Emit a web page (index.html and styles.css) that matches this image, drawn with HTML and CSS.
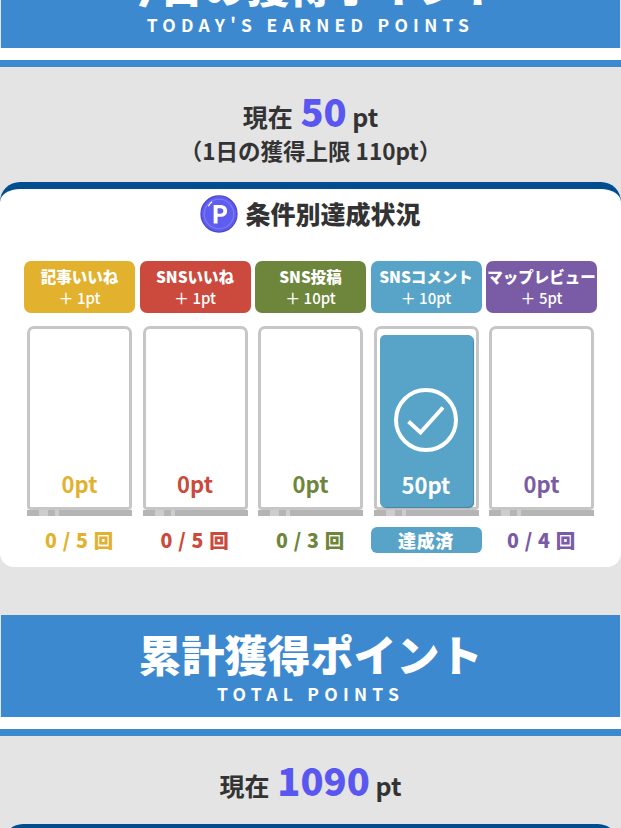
FILE: index.html
```html
<!DOCTYPE html>
<html lang="ja">
<head>
<meta charset="utf-8">
<meta name="viewport" content="width=device-width, initial-scale=1">
<title>ポイント</title>
<link rel="stylesheet" href="styles.css">
</head>
<body>
  <div class="page">
    <section class="points">
      <div class="heading">
        <h2>今日の獲得ポイント</h2>
        <p>TODAY'S EARNED POINTS</p>
      </div>
      <div class="body">
        <p class="current">現在 <b>50</b> pt</p>
        <p class="limit">（1日の獲得上限 110pt）</p>
        <div class="card">
          <h3 class="card-title">
            <svg class="p-icon" viewBox="0 0 32 32" width="38" height="38" aria-hidden="true">
              <circle cx="16" cy="16" r="15.2" fill="#5f5cf0" stroke="#4a47c8" stroke-width="1"/>
              <circle cx="16" cy="16" r="12.4" fill="none" stroke="#7c7af5" stroke-width="1"/>
              <path d="M7 9.5c.7-1.6 1.8-2.9 3.2-3.9" fill="none" stroke="#fff" stroke-width="1"/>
              <path d="M11.5 8.5h5.7c3.5 0 5.6 1.9 5.6 4.9s-2.2 5-5.6 5h-2.4v5.6h-3.3zM14.8 11.2v4.6h2.1c1.8 0 2.7-.8 2.7-2.3s-.9-2.3-2.7-2.3z" fill="#fff" fill-rule="evenodd"/>
            </svg>
            条件別達成状況
          </h3>
          <div class="grid">
            <div class="col yellow">
              <div class="label"><strong>記事いいね</strong><span>＋ 1pt</span></div>
              <div class="gauge"><span class="amount">0pt</span></div>
              <div class="base"></div>
              <div class="count">0 / 5 回</div>
            </div>
            <div class="col red">
              <div class="label"><strong>SNSいいね</strong><span>＋ 1pt</span></div>
              <div class="gauge"><span class="amount">0pt</span></div>
              <div class="base"></div>
              <div class="count">0 / 5 回</div>
            </div>
            <div class="col green">
              <div class="label"><strong>SNS投稿</strong><span>＋ 10pt</span></div>
              <div class="gauge"><span class="amount">0pt</span></div>
              <div class="base"></div>
              <div class="count">0 / 3 回</div>
            </div>
            <div class="col blue done">
              <div class="label"><strong>SNSコメント</strong><span>＋ 10pt</span></div>
              <div class="gauge">
                <div class="fill">
                  <svg class="check" viewBox="0 0 64 64" width="64" height="64" aria-hidden="true">
                    <circle cx="32" cy="32" r="30" fill="none" stroke="#fff" stroke-width="4"/>
                    <path d="M14.5 33.5 L26.5 44.5 L49 19.5" fill="none" stroke="#fff" stroke-width="4"/>
                  </svg>
                  <span class="amount">50pt</span>
                </div>
              </div>
              <div class="base"></div>
              <div class="count">達成済</div>
            </div>
            <div class="col purple">
              <div class="label"><strong>マップレビュー</strong><span>＋ 5pt</span></div>
              <div class="gauge"><span class="amount">0pt</span></div>
              <div class="base"></div>
              <div class="count">0 / 4 回</div>
            </div>
          </div>
        </div>
      </div>
    </section>

    <section class="points">
      <div class="heading">
        <h2>累計獲得ポイント</h2>
        <p>TOTAL POINTS</p>
      </div>
      <div class="body">
        <p class="current">現在 <b>1090</b> pt</p>
        <div class="card card-total"></div>
      </div>
    </section>
  </div>
</body>
</html>
```

FILE: styles.css
```css
* {
  box-sizing: border-box;
}

html, body {
  margin: 0;
  height: 828px;
  overflow: hidden;
}

body {
  font-family: "Noto Sans CJK JP", "Noto Sans", sans-serif;
  background-color: #e4e4e4;
  color: #333;
}

.page {
  margin-top: -54px;
}

/* section header */
.heading {
  height: 102px;
  padding-top: 9px;
  margin: 0 1px;
  background-color: #3d89d0;
  color: #fff;
  text-align: center;
}

.heading h2 {
  margin: 0;
  font-size: 43px;
  line-height: 58px;
  font-weight: 900;
}

.heading p {
  margin: 0;
  font-size: 17.5px;
  line-height: 24px;
  font-weight: 700;
  letter-spacing: 5.25px;
}

.body {
  margin-top: 12px;
  border-top: 7px solid #3d89d0;
  background-color: #e4e4e4;
  box-shadow: 0 -12px 0 #fff;
  text-align: center;
  height: 555px;
}

.current {
  margin: 0;
  padding-top: 23px;
  height: 68px;
  font-size: 25px;
  line-height: 42px;
  font-weight: 700;
}

.current b {
  font-size: 38px;
  color: #5a57f0;
  padding-left: 2px;
}

.limit {
  margin: 0;
  font-size: 22.5px;
  line-height: 30px;
  font-weight: 700;
}

/* white panel with the dark top edge */
.card {
  margin-top: 17px;
  height: 385px;
  border-top: 7px solid #004d8f;
  border-radius: 20px 20px 14px 14px;
  background-color: #fff;
}

.card-title {
  margin: 0;
  height: 72px;
  padding-top: 6px;
  display: flex;
  justify-content: center;
  align-items: flex-start;
  gap: 7px;
  font-size: 25px;
  line-height: 37px;
  font-weight: 900;
}

.grid {
  display: grid;
  grid-template-columns: repeat(5, 111px);
  justify-content: space-between;
  padding: 0 24px;
}

.col {
  display: flex;
  flex-direction: column;
  align-items: center;
}

.label {
  width: 100%;
  height: 52px;
  border-radius: 7px;
  padding-top: 5px;
  color: #fff;
  line-height: 21px;
}

.label strong {
  display: block;
  font-size: 15.5px;
  font-weight: 900;
  white-space: nowrap;
}

.label span {
  display: block;
  font-size: 15px;
  font-weight: 500;
}

.gauge {
  margin-top: 13px;
  width: 105px;
  height: 184px;
  border: 3px solid #c6c6c6;
  border-radius: 7px 7px 4px 4px;
  display: flex;
  flex-direction: column;
  justify-content: flex-end;
  align-items: stretch;
}

.amount {
  display: block;
  height: 41px;
  font-size: 22px;
  line-height: 34px;
  font-weight: 700;
}

.fill {
  margin: 6px 3px 0;
  height: 172px;
  flex: none;
  border-radius: 5px;
  background-color: #58a4c8;
  box-shadow: 1px 1px 1px #3f7ea0;
  color: #fff;
  display: flex;
  flex-direction: column;
  align-items: center;
  justify-content: flex-end;
}

.check {
  margin-bottom: 15px;
}

.fill .amount {
  height: 40px;
}

.base {
  width: 105px;
  height: 6px;
  background:
    linear-gradient(90deg,
      #b5b5b5 0 12px, #cdcdcd 12px 21px, #b5b5b5 21px 28px,
      #cdcdcd 28px 32px, #b5b5b5 32px);
}

.count {
  margin-top: 11px;
  width: 100%;
  height: 26px;
  font-size: 19.5px;
  line-height: 26px;
  font-weight: 900;
  letter-spacing: 0.7px;
  border-radius: 6px;
  white-space: nowrap;
}

/* per-condition colours */
.yellow .label { background-color: #e2b12e; }
.yellow .amount, .yellow .count { color: #e2b12e; }

.red .label { background-color: #cb4a3d; }
.red .amount, .red .count { color: #cb4a3d; }

.green .label { background-color: #6d863c; }
.green .amount, .green .count { color: #6d863c; }

.blue .label { background-color: #58a4c8; }
.blue .count {
  background-color: #58a4c8;
  color: #fff;
  font-size: 18px;
}
.blue .amount { color: #fff; }

.purple .label { background-color: #7a5ba5; }
.purple .amount, .purple .count { color: #7a5ba5; }

.card-total {
  margin: 20px 3px 0;
}
```
